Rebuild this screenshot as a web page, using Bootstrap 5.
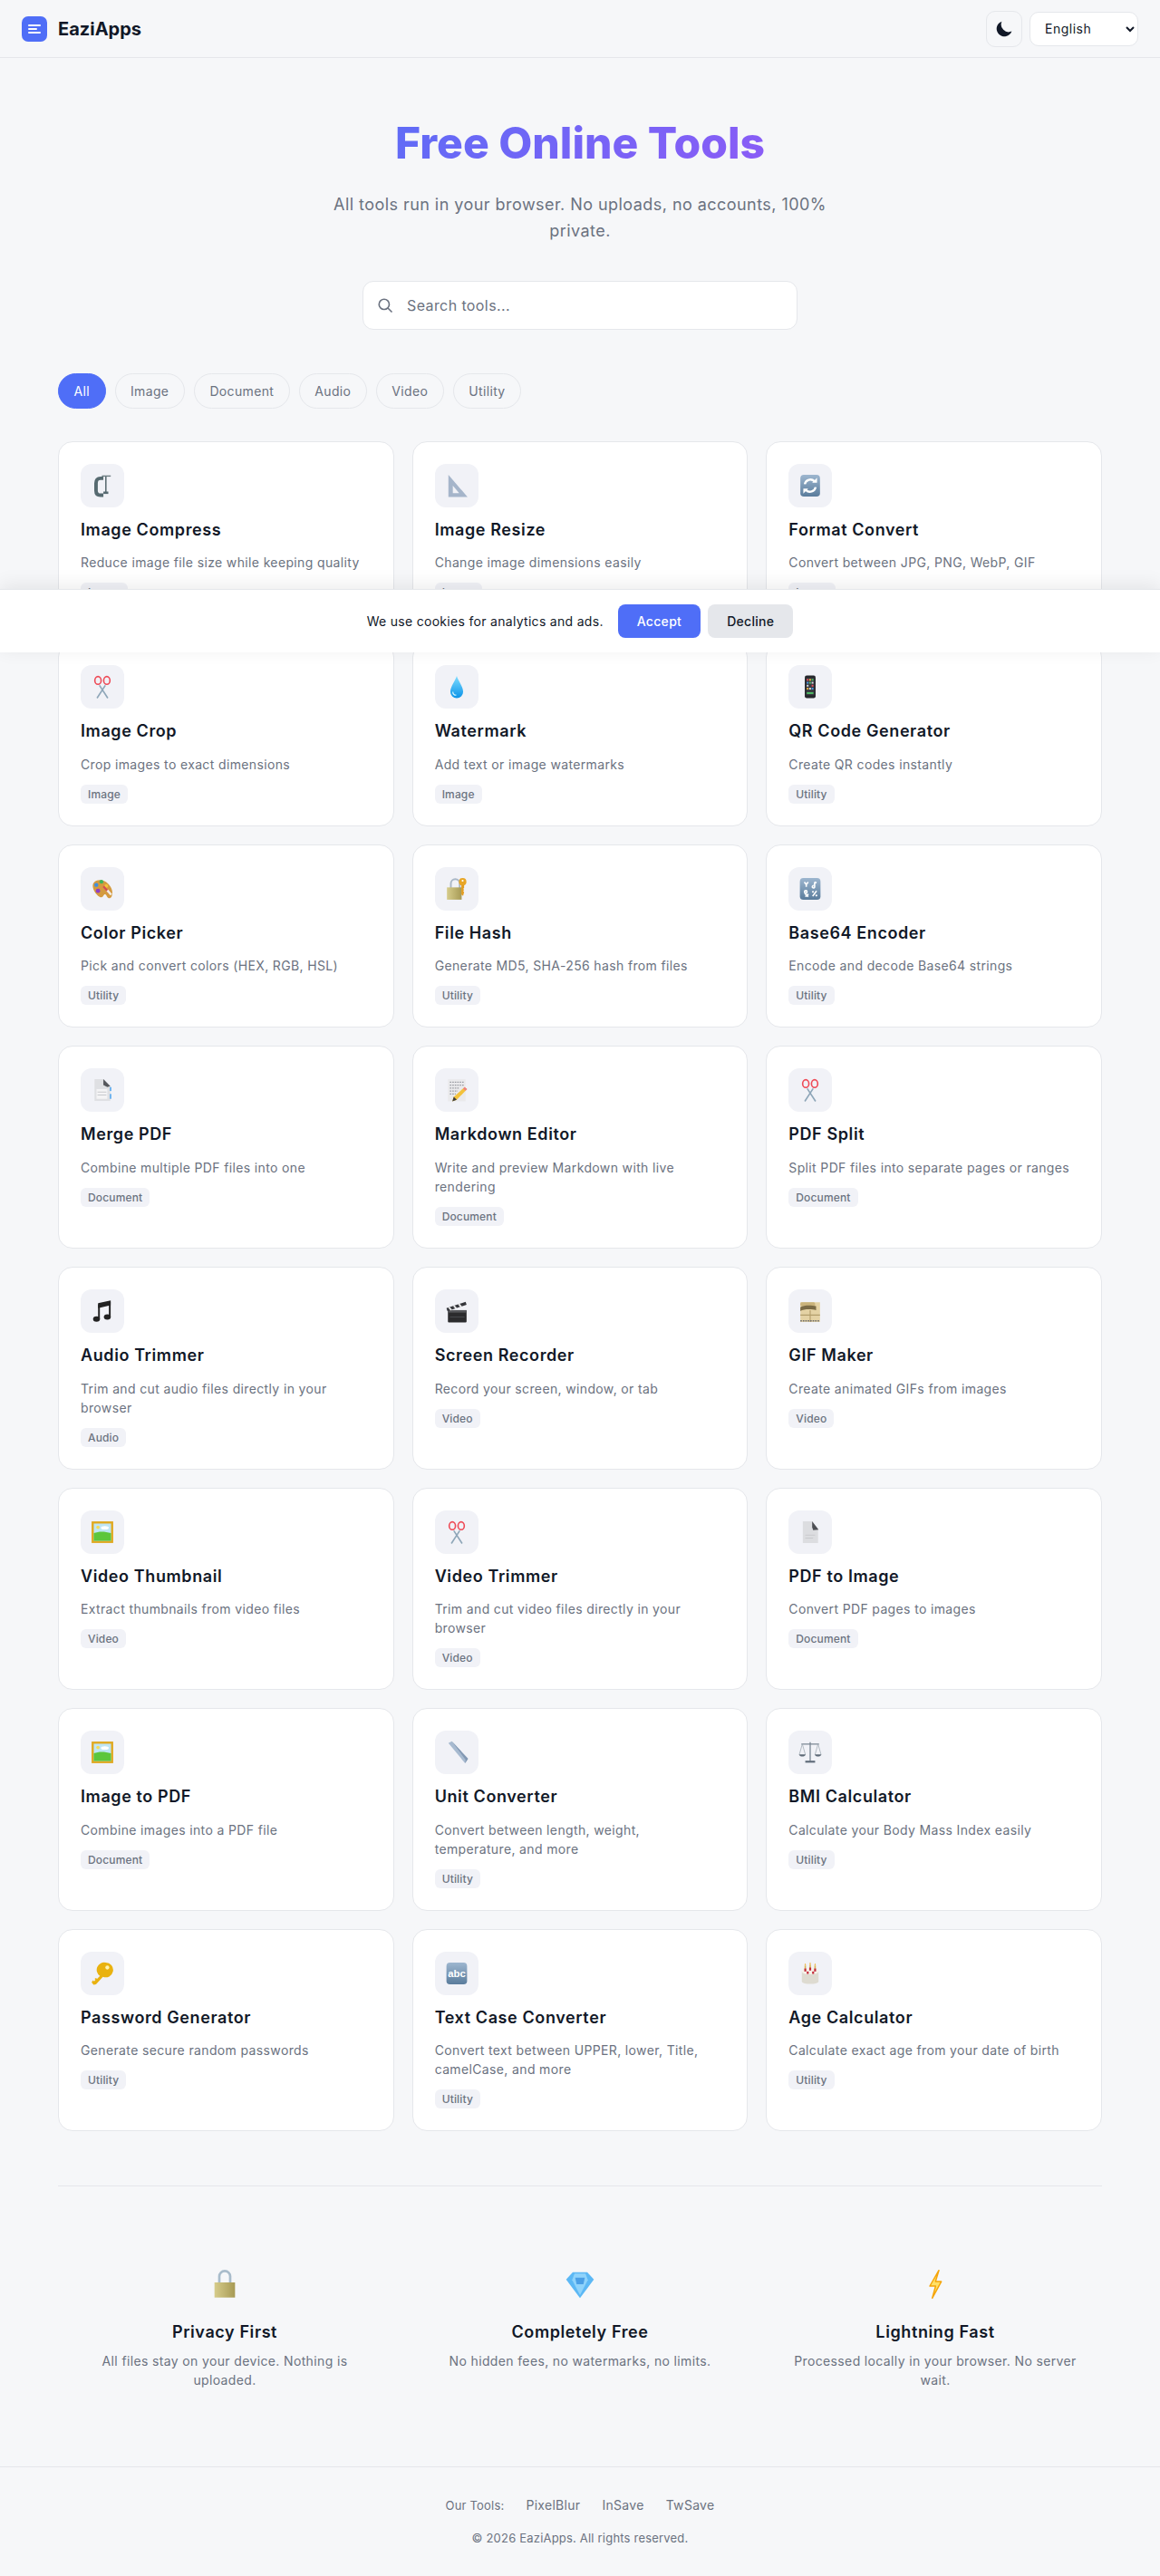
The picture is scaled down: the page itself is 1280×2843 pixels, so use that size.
<!DOCTYPE html>
<html lang="en">
<head>
<meta charset="utf-8">
<title>EaziApps - Free Online Tools</title>
<link href="https://cdn.jsdelivr.net/npm/bootstrap@5.3.0/dist/css/bootstrap.min.css" rel="stylesheet">
<style>
:root{--ea-blue:#4f6ef7;--ea-line:#e5e7eb;--ea-muted:#6b7280;--ea-ink:#111827;--ea-soft:#f1f2f7}
body{background:#f6f7f9;color:var(--ea-ink);font-family:Inter,"Liberation Sans",sans-serif;position:relative;min-height:2843px}
.top-bar{height:64px;border-bottom:1px solid var(--ea-line);padding:0 24px}
.brand-mark{width:28px;height:28px;display:block}
.brand-name{font-size:20px;font-weight:700;letter-spacing:0;color:var(--ea-ink);text-decoration:none;line-height:28px}
.theme-btn{width:40px;height:40px;border:1px solid var(--ea-line);border-radius:10px;background:#f6f7f9;padding:0}
.lang-select{width:120px;height:38px;border:1px solid var(--ea-line);border-radius:10px;background:#fff;color:var(--ea-ink);font-family:Inter,sans-serif;font-size:14px;letter-spacing:.5px;padding:0 12px}
.page-wrap{padding:0 64px}
.hero-block{padding-top:64px;text-align:center}
.hero-title{width:fit-content;font-size:48px;font-weight:800;letter-spacing:0;line-height:60px;margin:0 auto 24px;background:linear-gradient(135deg,#5f6cf6,#8b5cf6);-webkit-background-clip:text;background-clip:text;color:transparent}
.hero-sub{font-size:18px;letter-spacing:.45px;line-height:28.8px;color:var(--ea-muted);width:560px;margin:0 auto 40px}
.search-box{width:480px;height:54px;margin:0 auto 48px;position:relative}
.search-box svg{position:absolute;left:16px;top:18px}
.search-input{height:54px;border:1px solid var(--ea-line);border-radius:12px;padding:0 16px 0 48px;font-size:16px;letter-spacing:.4px;background:#fff;box-shadow:none;color:var(--ea-ink)}
.search-input::placeholder{color:var(--ea-muted)}
.pill-row{column-gap:10px}
.filter-pill{height:39px;border:1px solid var(--ea-line);border-radius:50px;background:#f6f7f9;color:var(--ea-muted);font-size:14px;font-weight:400;letter-spacing:.35px;padding:0 16.5px;line-height:37px}
.filter-pill.is-on{background:var(--ea-blue);border-color:var(--ea-blue);color:#fff}
.tool-grid{--bs-gutter-x:20px;--bs-gutter-y:20px;margin-top:16px}
.tool-card{border:1px solid var(--ea-line);border-radius:16px;background:#fff;--bs-card-border-color:var(--ea-line)}
.tool-card .card-body{padding:24px}
.tool-icon{width:48px;height:48px;border-radius:12px;background:var(--ea-soft);margin-bottom:12px}
.tool-icon svg{width:26px;height:26px;display:block}
.tool-name{font-size:18px;font-weight:600;letter-spacing:.6px;line-height:26.6px;margin:0 0 12px;color:var(--ea-ink)}
.tool-desc{font-size:14px;letter-spacing:.36px;line-height:21px;color:var(--ea-muted);margin:0 0 12px}
.tool-tag{display:block;width:fit-content;font-size:12px;font-weight:500;letter-spacing:.15px;line-height:15px;padding:3px 8px;border-radius:6px;background:var(--ea-soft);color:var(--ea-muted)}
.feature-zone{margin-top:60px;border-top:1px solid var(--ea-line);padding:92px 0 85px}
.feature-zone .row{--bs-gutter-x:24px}
.feature-icon{width:32px;height:32px;display:block;margin:0 auto 24px}
.feature-name{font-size:18px;font-weight:600;letter-spacing:.6px;line-height:26px;margin:0 0 8px}
.feature-desc{font-size:14px;letter-spacing:.36px;line-height:21px;color:var(--ea-muted);margin:0}
.page-foot{border-top:1px solid var(--ea-line);padding-top:32px;text-align:center;color:var(--ea-muted);font-size:13px;letter-spacing:.2px}
.foot-links{gap:24px;margin-bottom:16px;line-height:20px}
.foot-links a{color:var(--ea-muted);text-decoration:none;font-size:14px;letter-spacing:.3px}
.foot-copy{margin:0;line-height:20px}
.cookie-strip{position:absolute;left:0;right:0;top:650px;height:70px;background:#fff;border-top:1px solid var(--ea-line);box-shadow:0 -4px 20px rgba(0,0,0,.08);z-index:10;font-size:14px;letter-spacing:.3px;gap:16px}
.cookie-btn{height:37px;border:0;border-radius:8px;font-size:14px;font-weight:500;letter-spacing:.3px;padding:0 21px}
.cookie-btn.is-yes{background:var(--ea-blue);color:#fff}
.cookie-btn.is-no{background:var(--ea-line);color:var(--ea-ink)}
.cookie-actions{gap:8px}
</style>
</head>
<body>
<svg width="0" height="0" class="position-absolute" aria-hidden="true">
<defs>
<linearGradient id="g-drop" x1="0" y1="0" x2="0" y2="1"><stop offset="0" stop-color="#7edcff"/><stop offset="1" stop-color="#0b93e8"/></linearGradient>
<linearGradient id="g-blue" x1="0" y1="0" x2="0" y2="1"><stop offset="0" stop-color="#9db6cf"/><stop offset="1" stop-color="#5a7c9c"/></linearGradient>
<linearGradient id="g-brass" x1="0" y1="0" x2="1" y2="0"><stop offset="0" stop-color="#d6cc8b"/><stop offset="1" stop-color="#a79a55"/></linearGradient>
<symbol id="i-clamp" viewBox="0 0 24 24"><path d="M13 4.500h-3C7 4.500 5.500 6.500 5.500 9.500v7.500c0 3 1.800 4.700 4.500 4.700h3" fill="none" stroke="#566a70" stroke-width="3.600"/><path d="M15.500 2v17" stroke="#5f7075" stroke-width="1.500"/><path d="M11.500 2.200h9" stroke="#6f7f84" stroke-width="1.300"/><rect x="13" y="18" width="5" height="2.400" fill="#566a70"/></symbol>
<symbol id="i-tri" viewBox="0 0 24 24"><path fill="#a5b5ca" fill-rule="evenodd" d="M3.500 1 23 23.500H3.500zM8 12v7.500h6.500z"/></symbol>
<symbol id="i-sync" viewBox="0 0 24 24"><rect x="2" y="1" width="20" height="22" rx="3.500" fill="url(#g-blue)"/><path d="M6.500 10.500a5.800 5.800 0 0 1 9.800-3" fill="none" stroke="#fff" stroke-width="2.200"/><path d="M14 9h5V4z" fill="#fff"/><path d="M17.500 13.500a5.800 5.800 0 0 1-9.800 3" fill="none" stroke="#fff" stroke-width="2.200"/><path d="M10 15H5v5z" fill="#fff"/></symbol>
<symbol id="i-cut" viewBox="0 0 24 24"><path d="M9 10.500 17.500 23.500M15 10.500 6.500 23.500" stroke="#8ea6b8" stroke-width="1.500" fill="none"/><ellipse cx="7.500" cy="5.500" rx="3.200" ry="4" fill="none" stroke="#ee4b57" stroke-width="1.500"/><ellipse cx="16.500" cy="5.500" rx="3.200" ry="4" fill="none" stroke="#ee4b57" stroke-width="1.500"/></symbol>
<symbol id="i-drop" viewBox="0 0 24 24"><path fill="url(#g-drop)" d="M12 1c1 4 6.500 11 6.500 16a6.500 6.500 0 0 1-13 0C5.500 12 11 5 12 1z"/><path d="M8 17c0 2 1.500 3.500 3.500 3.500" fill="none" stroke="#c8f1ff" stroke-width="1.200"/></symbol>
<symbol id="i-phone" viewBox="0 0 24 24"><rect x="6.500" y="0.500" width="11" height="23" rx="2" fill="#26282c"/><rect x="8" y="3" width="8" height="17.500" fill="#3a3c42"/><g fill="#e94e5a"><rect x="8.500" y="4" width="1.800" height="1.800"/><rect x="13.500" y="10" width="1.800" height="1.800"/></g><g fill="#f5b53f"><rect x="11" y="4" width="1.800" height="1.800"/><rect x="8.500" y="13" width="1.800" height="1.800"/></g><g fill="#4fbf67"><rect x="13.500" y="4" width="1.800" height="1.800"/><rect x="11" y="7" width="1.800" height="1.800"/><rect x="8.500" y="17.500" width="6.800" height="1.800"/></g><g fill="#4a9be8"><rect x="8.500" y="7" width="1.800" height="1.800"/><rect x="13.500" y="13" width="1.800" height="1.800"/></g><g fill="#d9dde3"><rect x="13.500" y="7" width="1.800" height="1.800"/><rect x="8.500" y="10" width="1.800" height="1.800"/><rect x="11" y="13" width="1.800" height="1.800"/></g></symbol>
<symbol id="i-palette" viewBox="0 0 24 24"><path fill="#d49a3f" d="M3 6c3-4 10-4 15 1 4 4 5 9 3.500 12.500-1.500 3-4 2-5 0-1-2.500-2.500-2.500-3.500-.5-1 2.500-4 2-6.500-1C3 14.500 1 9 3 6z"/><circle cx="11" cy="4.800" r="2" fill="#3fb45a"/><circle cx="5.800" cy="8" r="2" fill="#3d8fe0"/><circle cx="16" cy="9" r="1.800" fill="#f1c33a"/><circle cx="7.500" cy="14" r="2.200" fill="#8e3fc4"/><path d="M13 9.500 20 17" stroke="#d44a55" stroke-width="2"/><path d="M17 13.500 21 18" stroke="#f2efe6" stroke-width="2.400"/></symbol>
<symbol id="i-lockkey" viewBox="0 0 24 24"><path d="M6 11V6.500a4.500 4.500 0 0 1 9 0V11" fill="none" stroke="#a9b7c6" stroke-width="1.800"/><rect x="2" y="10.500" width="15" height="12.500" fill="url(#g-brass)"/><circle cx="18" cy="4.800" r="3.800" fill="#e8a626"/><circle cx="18" cy="3.700" r="1" fill="#fff"/><path d="M16.700 8h2.800v3l-1 1 1 1-1 1.200 1 1-1 4-1.800-1.500z" fill="#e29c1e"/></symbol>
<symbol id="i-symbols" viewBox="0 0 24 24"><rect x="1.500" y="1" width="21" height="22" rx="3.500" fill="url(#g-blue)"/><g fill="none" stroke="#fff" stroke-width="1.500"><path d="M6 5l2 2.500L10 5M8 7.500V10"/><path d="M16.500 5v4.500a1.200 1.200 0 1 1-1-.8M16.500 5l2 .7"/><circle cx="7.500" cy="15" r="1.300"/><path d="M6.500 16.500l3.500 3.500M7 19.500c1.500 0 2.500-1 3-2.500"/><path d="M14.500 19.500l4-5.500"/></g><circle cx="14.800" cy="15" r="1" fill="#fff"/><circle cx="18.300" cy="18.800" r="1" fill="#fff"/></symbol>
<symbol id="i-pages" viewBox="0 0 24 24"><path fill="#dfe0e3" d="M4 1h9l7 7v15H4z"/><path fill="#55575c" d="M13 1l7 7-3 1-4-2z"/><path fill="#f4f4f5" d="M6 11h11v10H6z"/><path d="M7 14h9M7 17h9" stroke="#c7c9cd"/><rect x="19.600" y="9" width="1.400" height="4" fill="#4ba3ee"/><rect x="19.600" y="16" width="1.400" height="5" fill="#4ba3ee"/></symbol>
<symbol id="i-page" viewBox="0 0 24 24"><path fill="#dcdde0" d="M4.500 1H14l6 7.500V23H4.500z"/><path fill="#4d4f54" d="M14 1l6.500 8.500-5.500.5-1-3z"/><path d="M7 15h10M7 18h8" stroke="#c9cacd"/></symbol>
<symbol id="i-memo" viewBox="0 0 24 24"><rect x="3" y="1" width="18" height="22.500" fill="#eaeaec"/><path d="M5 4h14M5 7h14M5 10h10M5 13h8M5 16h6" stroke="#9a9ca2" stroke-dasharray="1.500 1"/><path d="M20 9l2.500 2L12 22l-4.500 1.500L9 19z" fill="#f3c23c"/><path d="M20 9l2.500 2-1.500 1.600-2.500-2z" fill="#ee7f86"/><path d="M7.500 23.500 9 19l3 3z" fill="#3b3b3b"/></symbol>
<symbol id="i-note" viewBox="0 0 24 24"><path d="M8.500 5v15M19.500 2.500v15" stroke="#222" stroke-width="1.800"/><path d="M7.600 4 20.400 1.200V6L7.600 9z" fill="#222"/><ellipse cx="6" cy="20" rx="3.500" ry="2.800" fill="#222"/><ellipse cx="17" cy="18" rx="3.500" ry="2.800" fill="#222"/></symbol>
<symbol id="i-clap" viewBox="0 0 24 24"><rect x="3" y="11" width="19" height="12.500" rx="1" fill="#2b2b2d"/><rect x="3" y="11" width="19" height="2.500" fill="#55565a"/><path d="M1.500 9 21 2.500l1 3L2.500 12z" fill="#34353a"/><path d="M4 8.200l2.500 2.700M9 6.500l2.500 2.800M14 4.800l2.500 2.800" stroke="#e8e8e8" stroke-width="1.800"/><path d="M5 18h15" stroke="#46474b"/></symbol>
<symbol id="i-film" viewBox="0 0 24 24"><rect x="2" y="3" width="20" height="20" fill="#e4d2a4"/><rect x="2" y="3" width="15" height="4" rx="1.500" fill="#c9b27a"/><path d="M2 8c3-2 11-2 16-1v4c-5-1.200-13-1-16 1z" fill="#7a6a45"/><path d="M12 11v12M2 16h20" stroke="#b39e6b"/><path d="M2 22h20" stroke="#6d6d6d" stroke-width="1.400" stroke-dasharray="1.500 1"/></symbol>
<symbol id="i-frame" viewBox="0 0 24 24"><rect x="1" y="1" width="22" height="22" fill="#e0a91f"/><rect x="3.200" y="3.200" width="17.600" height="17.600" fill="#bfe6f5"/><path d="M3.200 13c5-2 11-2 17.600 0v7.800H3.200z" fill="#5cc63c"/><circle cx="7.500" cy="7" r="1.700" fill="#f6dc57"/><ellipse cx="14.500" cy="7.500" rx="4" ry="1.800" fill="#fff"/></symbol>
<symbol id="i-ruler" viewBox="0 0 24 24"><path fill="#a7bad0" d="M3.500 2.500 7 .8 23.500 18.500 20.500 23z"/><path fill="#8298b3" d="M7 .8 23.500 18.500 20.500 23 21 19.500z"/></symbol>
<symbol id="i-scale" viewBox="0 0 24 24"><path d="M12 1.500V21M3 3.500h18" stroke="#7b8794" stroke-width="1.200" fill="none"/><path d="M7 21.500h10" stroke="#5f6b78" stroke-width="2"/><path d="M4 3.500 1 14M4 3.500 7 14M20 3.500 17 14M20 3.500 23 14" stroke="#a0a9b3" stroke-width=".7" fill="none"/><path d="M.5 14h7c-.8 3-6.200 3-7 0zM16.500 14h7c-.8 3-6.200 3-7 0z" fill="#5f6b78"/></symbol>
<symbol id="i-key" viewBox="0 0 24 24"><path fill="#e9b20f" d="M15.500 1a7.500 7.500 0 1 1-3 14.400L5.500 23 3 23.500 1 21l1.500-2 1 1 1.500-1.500-1-1 1.500-1 1 1 3-3A7.500 7.500 0 0 1 15.500 1z"/><circle cx="17" cy="6" r="2" fill="#fff3b0"/></symbol>
<symbol id="i-abc" viewBox="0 0 24 24"><rect x="1.500" y="1" width="21" height="22" rx="3.500" fill="url(#g-blue)"/><text x="12" y="15.500" text-anchor="middle" font-family="Liberation Sans,sans-serif" font-size="10.500" font-weight="700" fill="#fff">abc</text></symbol>
<symbol id="i-cake" viewBox="0 0 24 24"><path d="M7 4v5M12 3v5M17 4v5" stroke="#d9b452" stroke-width="1.500"/><path d="M7 1.500l-.8 2h1.600zM12 .5l-.8 2h1.600zM17 1.500l-.8 2h1.600z" fill="#f0a820"/><path d="M3.500 10c0-3 17-3 17 0v10c0 3.500-17 3.500-17 0z" fill="#dedbd1"/><ellipse cx="12" cy="10" rx="8.500" ry="3" fill="#f6f3ea"/><g fill="#c22a3a"><rect x="6" y="7" width="2" height="3"/><rect x="11" y="6" width="2" height="3"/><rect x="16" y="7" width="2" height="3"/><rect x="8.500" y="10" width="2" height="2.500"/><rect x="14" y="10" width="2" height="2.500"/></g></symbol>
<symbol id="i-lock" viewBox="0 0 24 24"><path d="M7.500 11V5.500a4.500 4.500 0 0 1 9 0V11" fill="none" stroke="#a9bccb" stroke-width="2"/><rect x="3.500" y="10.500" width="17" height="12.500" fill="url(#g-brass)"/></symbol>
<symbol id="i-gem" viewBox="0 0 24 24"><path fill="#5cb8f5" d="M6 2h12l5.500 6L12 23.500.5 8z"/><path fill="#8fd3fb" d="M7.500 3.200h9l2 5.300L12 21 5.500 8.500z"/><path fill="#4a9fe6" d="M8 6.500h8l-1.200 5.500H9.200z"/></symbol>
<symbol id="i-bolt" viewBox="0 0 24 24"><path d="M15 .5 7.500 13.500h4.800L9.500 23.500 17 9.800h-4.800z" fill="#ffe067" stroke="#f5a50a" stroke-width="1.100" stroke-linejoin="round"/></symbol>
</defs>
</svg>

<header class="top-bar d-flex align-items-center justify-content-between">
  <a href="#" class="brand-name d-flex align-items-center gap-2">
    <svg class="brand-mark me-1" viewBox="0 0 28 28" aria-hidden="true"><rect width="28" height="28" rx="7" fill="#4f6ef7"/><rect x="7" y="9" width="14" height="2" rx="1" fill="#fff"/><rect x="7" y="13" width="10" height="2" rx="1" fill="#fff"/><rect x="7" y="17" width="14" height="2" rx="1" fill="#fff"/></svg>
    EaziApps
  </a>
  <div class="d-flex align-items-center gap-2">
    <button class="theme-btn d-flex align-items-center justify-content-center" type="button" aria-label="Toggle theme">
      <svg width="21" height="21" viewBox="0 0 24 24" aria-hidden="true"><path fill="#111827" d="M21 15.500A9.500 9.500 0 0 1 8.500 3a9.800 9.800 0 1 0 12.500 12.500z"/></svg>
    </button>
    <select class="lang-select" aria-label="Language"><option>English</option></select>
  </div>
</header>

<main class="page-wrap">
  <section class="hero-block">
    <h1 class="hero-title">Free Online Tools</h1>
    <p class="hero-sub">All tools run in your browser. No uploads, no accounts, 100% private.</p>
    <div class="search-box">
      <svg width="18" height="18" viewBox="0 0 24 24" fill="none" stroke="#6b7280" stroke-width="2.200" aria-hidden="true"><circle cx="10.500" cy="10.500" r="7.500"/><path d="m16 16 6 6"/></svg>
      <input type="text" class="form-control search-input" placeholder="Search tools...">
    </div>
  </section>

  <div class="d-flex flex-wrap pill-row">
    <button class="filter-pill is-on" type="button">All</button>
    <button class="filter-pill" type="button">Image</button>
    <button class="filter-pill" type="button">Document</button>
    <button class="filter-pill" type="button">Audio</button>
    <button class="filter-pill" type="button">Video</button>
    <button class="filter-pill" type="button">Utility</button>
  </div>

  <div class="row row-cols-3 tool-grid">
    <div class="col"><div class="card tool-card h-100"><div class="card-body"><div class="tool-icon d-flex align-items-center justify-content-center"><svg aria-hidden="true"><use href="#i-clamp"/></svg></div><h3 class="tool-name">Image Compress</h3><p class="tool-desc">Reduce image file size while keeping quality</p><span class="tool-tag">Image</span></div></div></div>
    <div class="col"><div class="card tool-card h-100"><div class="card-body"><div class="tool-icon d-flex align-items-center justify-content-center"><svg aria-hidden="true"><use href="#i-tri"/></svg></div><h3 class="tool-name">Image Resize</h3><p class="tool-desc">Change image dimensions easily</p><span class="tool-tag">Image</span></div></div></div>
    <div class="col"><div class="card tool-card h-100"><div class="card-body"><div class="tool-icon d-flex align-items-center justify-content-center"><svg aria-hidden="true"><use href="#i-sync"/></svg></div><h3 class="tool-name">Format Convert</h3><p class="tool-desc">Convert between JPG, PNG, WebP, GIF</p><span class="tool-tag">Image</span></div></div></div>

    <div class="col"><div class="card tool-card h-100"><div class="card-body"><div class="tool-icon d-flex align-items-center justify-content-center"><svg aria-hidden="true"><use href="#i-cut"/></svg></div><h3 class="tool-name">Image Crop</h3><p class="tool-desc">Crop images to exact dimensions</p><span class="tool-tag">Image</span></div></div></div>
    <div class="col"><div class="card tool-card h-100"><div class="card-body"><div class="tool-icon d-flex align-items-center justify-content-center"><svg aria-hidden="true"><use href="#i-drop"/></svg></div><h3 class="tool-name">Watermark</h3><p class="tool-desc">Add text or image watermarks</p><span class="tool-tag">Image</span></div></div></div>
    <div class="col"><div class="card tool-card h-100"><div class="card-body"><div class="tool-icon d-flex align-items-center justify-content-center"><svg aria-hidden="true"><use href="#i-phone"/></svg></div><h3 class="tool-name">QR Code Generator</h3><p class="tool-desc">Create QR codes instantly</p><span class="tool-tag">Utility</span></div></div></div>

    <div class="col"><div class="card tool-card h-100"><div class="card-body"><div class="tool-icon d-flex align-items-center justify-content-center"><svg aria-hidden="true"><use href="#i-palette"/></svg></div><h3 class="tool-name">Color Picker</h3><p class="tool-desc">Pick and convert colors (HEX, RGB, HSL)</p><span class="tool-tag">Utility</span></div></div></div>
    <div class="col"><div class="card tool-card h-100"><div class="card-body"><div class="tool-icon d-flex align-items-center justify-content-center"><svg aria-hidden="true"><use href="#i-lockkey"/></svg></div><h3 class="tool-name">File Hash</h3><p class="tool-desc">Generate MD5, SHA-256 hash from files</p><span class="tool-tag">Utility</span></div></div></div>
    <div class="col"><div class="card tool-card h-100"><div class="card-body"><div class="tool-icon d-flex align-items-center justify-content-center"><svg aria-hidden="true"><use href="#i-symbols"/></svg></div><h3 class="tool-name">Base64 Encoder</h3><p class="tool-desc">Encode and decode Base64 strings</p><span class="tool-tag">Utility</span></div></div></div>

    <div class="col"><div class="card tool-card h-100"><div class="card-body"><div class="tool-icon d-flex align-items-center justify-content-center"><svg aria-hidden="true"><use href="#i-pages"/></svg></div><h3 class="tool-name">Merge PDF</h3><p class="tool-desc">Combine multiple PDF files into one</p><span class="tool-tag">Document</span></div></div></div>
    <div class="col"><div class="card tool-card h-100"><div class="card-body"><div class="tool-icon d-flex align-items-center justify-content-center"><svg aria-hidden="true"><use href="#i-memo"/></svg></div><h3 class="tool-name">Markdown Editor</h3><p class="tool-desc">Write and preview Markdown with live rendering</p><span class="tool-tag">Document</span></div></div></div>
    <div class="col"><div class="card tool-card h-100"><div class="card-body"><div class="tool-icon d-flex align-items-center justify-content-center"><svg aria-hidden="true"><use href="#i-cut"/></svg></div><h3 class="tool-name">PDF Split</h3><p class="tool-desc">Split PDF files into separate pages or ranges</p><span class="tool-tag">Document</span></div></div></div>

    <div class="col"><div class="card tool-card h-100"><div class="card-body"><div class="tool-icon d-flex align-items-center justify-content-center"><svg aria-hidden="true"><use href="#i-note"/></svg></div><h3 class="tool-name">Audio Trimmer</h3><p class="tool-desc">Trim and cut audio files directly in your browser</p><span class="tool-tag">Audio</span></div></div></div>
    <div class="col"><div class="card tool-card h-100"><div class="card-body"><div class="tool-icon d-flex align-items-center justify-content-center"><svg aria-hidden="true"><use href="#i-clap"/></svg></div><h3 class="tool-name">Screen Recorder</h3><p class="tool-desc">Record your screen, window, or tab</p><span class="tool-tag">Video</span></div></div></div>
    <div class="col"><div class="card tool-card h-100"><div class="card-body"><div class="tool-icon d-flex align-items-center justify-content-center"><svg aria-hidden="true"><use href="#i-film"/></svg></div><h3 class="tool-name">GIF Maker</h3><p class="tool-desc">Create animated GIFs from images</p><span class="tool-tag">Video</span></div></div></div>

    <div class="col"><div class="card tool-card h-100"><div class="card-body"><div class="tool-icon d-flex align-items-center justify-content-center"><svg aria-hidden="true"><use href="#i-frame"/></svg></div><h3 class="tool-name">Video Thumbnail</h3><p class="tool-desc">Extract thumbnails from video files</p><span class="tool-tag">Video</span></div></div></div>
    <div class="col"><div class="card tool-card h-100"><div class="card-body"><div class="tool-icon d-flex align-items-center justify-content-center"><svg aria-hidden="true"><use href="#i-cut"/></svg></div><h3 class="tool-name">Video Trimmer</h3><p class="tool-desc">Trim and cut video files directly in your browser</p><span class="tool-tag">Video</span></div></div></div>
    <div class="col"><div class="card tool-card h-100"><div class="card-body"><div class="tool-icon d-flex align-items-center justify-content-center"><svg aria-hidden="true"><use href="#i-page"/></svg></div><h3 class="tool-name">PDF to Image</h3><p class="tool-desc">Convert PDF pages to images</p><span class="tool-tag">Document</span></div></div></div>

    <div class="col"><div class="card tool-card h-100"><div class="card-body"><div class="tool-icon d-flex align-items-center justify-content-center"><svg aria-hidden="true"><use href="#i-frame"/></svg></div><h3 class="tool-name">Image to PDF</h3><p class="tool-desc">Combine images into a PDF file</p><span class="tool-tag">Document</span></div></div></div>
    <div class="col"><div class="card tool-card h-100"><div class="card-body"><div class="tool-icon d-flex align-items-center justify-content-center"><svg aria-hidden="true"><use href="#i-ruler"/></svg></div><h3 class="tool-name">Unit Converter</h3><p class="tool-desc">Convert between length, weight,<br>temperature, and more</p><span class="tool-tag">Utility</span></div></div></div>
    <div class="col"><div class="card tool-card h-100"><div class="card-body"><div class="tool-icon d-flex align-items-center justify-content-center"><svg aria-hidden="true"><use href="#i-scale"/></svg></div><h3 class="tool-name">BMI Calculator</h3><p class="tool-desc">Calculate your Body Mass Index easily</p><span class="tool-tag">Utility</span></div></div></div>

    <div class="col"><div class="card tool-card h-100"><div class="card-body"><div class="tool-icon d-flex align-items-center justify-content-center"><svg aria-hidden="true"><use href="#i-key"/></svg></div><h3 class="tool-name">Password Generator</h3><p class="tool-desc">Generate secure random passwords</p><span class="tool-tag">Utility</span></div></div></div>
    <div class="col"><div class="card tool-card h-100"><div class="card-body"><div class="tool-icon d-flex align-items-center justify-content-center"><svg aria-hidden="true"><use href="#i-abc"/></svg></div><h3 class="tool-name">Text Case Converter</h3><p class="tool-desc">Convert text between UPPER, lower, Title, camelCase, and more</p><span class="tool-tag">Utility</span></div></div></div>
    <div class="col"><div class="card tool-card h-100"><div class="card-body"><div class="tool-icon d-flex align-items-center justify-content-center"><svg aria-hidden="true"><use href="#i-cake"/></svg></div><h3 class="tool-name">Age Calculator</h3><p class="tool-desc">Calculate exact age from your date of birth</p><span class="tool-tag">Utility</span></div></div></div>
  </div>

  <section class="feature-zone">
    <div class="row row-cols-3 text-center">
      <div class="col"><div class="px-4"><svg class="feature-icon" aria-hidden="true"><use href="#i-lock"/></svg><h3 class="feature-name">Privacy First</h3><p class="feature-desc">All files stay on your device. Nothing is uploaded.</p></div></div>
      <div class="col"><div class="px-4"><svg class="feature-icon" aria-hidden="true"><use href="#i-gem"/></svg><h3 class="feature-name">Completely Free</h3><p class="feature-desc">No hidden fees, no watermarks, no limits.</p></div></div>
      <div class="col"><div class="px-4"><svg class="feature-icon" aria-hidden="true"><use href="#i-bolt"/></svg><h3 class="feature-name">Lightning Fast</h3><p class="feature-desc">Processed locally in your browser. No server wait.</p></div></div>
    </div>
  </section>
</main>

<footer class="page-foot">
  <div class="foot-links d-flex justify-content-center align-items-center"><span>Our Tools:</span><a href="#">PixelBlur</a><a href="#">InSave</a><a href="#">TwSave</a></div>
  <p class="foot-copy">© 2026 EaziApps. All rights reserved.</p>
</footer>

<div class="cookie-strip d-flex align-items-center justify-content-center">
  <span>We use cookies for analytics and ads.</span>
  <div class="cookie-actions d-flex"><button class="cookie-btn is-yes" type="button">Accept</button><button class="cookie-btn is-no" type="button">Decline</button></div>
</div>
</body>
</html>
